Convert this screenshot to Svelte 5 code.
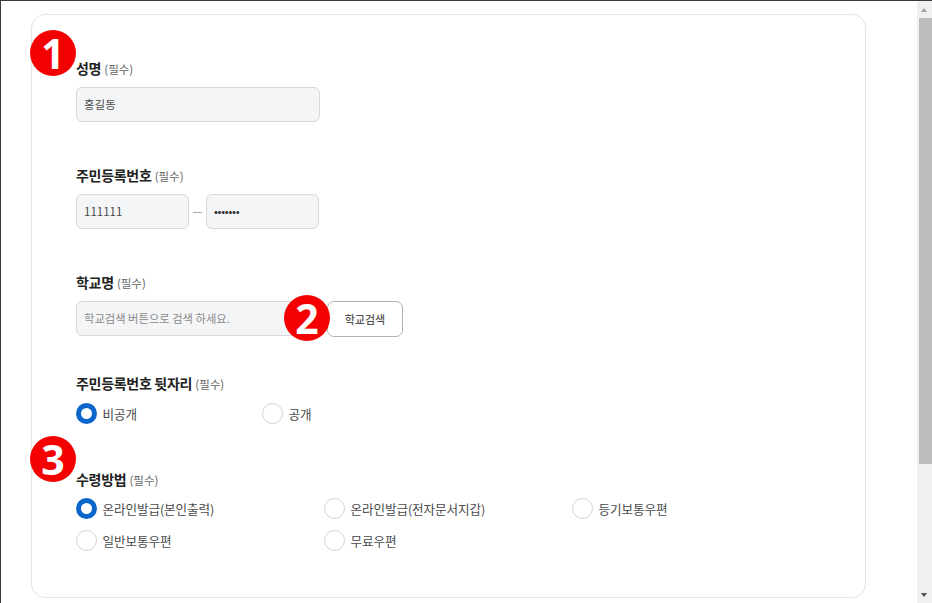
<script>
  const delivery = [
    { label: '온라인발급(본인출력)', checked: true },
    { label: '온라인발급(전자문서지갑)' },
    { label: '등기보통우편' },
    { label: '일반보통우편' },
    { label: '무료우편' }
  ];
</script>

<div class="window">
  <main class="page">
    <section class="card">
      <span class="badge badge-one">1</span>
      <span class="badge badge-two">2</span>
      <span class="badge badge-three">3</span>

      <div class="field name">
        <div class="label"><strong>성명</strong> <small>(필수)</small></div>
        <div class="input wide">홍길동</div>
      </div>

      <div class="field rrn">
        <div class="label"><strong>주민등록번호</strong> <small>(필수)</small></div>
        <div class="row">
          <div class="input half">111111</div>
          <span class="dash"></span>
          <div class="input half secret">•••••••</div>
        </div>
      </div>

      <div class="field school">
        <div class="label"><strong>학교명</strong> <small>(필수)</small></div>
        <div class="row">
          <div class="input wide placeholder">학교검색 버튼으로 검색 하세요.</div>
          <button class="search" type="button">학교검색</button>
        </div>
      </div>

      <div class="field reveal">
        <div class="label"><strong>주민등록번호 뒷자리</strong> <small>(필수)</small></div>
        <div class="radios two">
          <div class="radio"><span class="dot on"></span>비공개</div>
          <div class="radio"><span class="dot"></span>공개</div>
        </div>
      </div>

      <div class="field method">
        <div class="label"><strong>수령방법</strong> <small>(필수)</small></div>
        <div class="radios three">
          {#each delivery as item}
            <div class="radio"><span class="dot" class:on={item.checked}></span>{item.label}</div>
          {/each}
        </div>
      </div>
    </section>
  </main>

  <aside class="scrollbar">
    <span class="arrow up"></span>
    <div class="track"><div class="thumb"></div></div>
    <span class="arrow down"></span>
  </aside>
</div>

<style>
  :global(*) {
    box-sizing: border-box;
  }

  :global(body) {
    background: #fff;
    overflow: hidden;
  }

  .window {
    display: flex;
    width: 932px;
    height: 603px;
    overflow: hidden;
    border-top: 1px solid #3a3a3a;
    border-left: 1px solid #3a3a3a;
    font-family: "Noto Sans CJK KR", "Noto Sans", sans-serif;
    color: #4a4a4a;
  }

  .page {
    flex: 1;
    min-width: 0;
    padding: 13px 51px 0 30px;
  }

  .card {
    position: relative;
    height: 584px;
    padding: 44px 0 0 44px;
    border: 1px solid #e4e4e4;
    border-radius: 14px;
  }

  .badge {
    position: absolute;
    width: 46px;
    height: 46px;
    border-radius: 50%;
    background: #f40000;
    color: #fff;
    font-family: "Noto Sans", sans-serif;
    font-size: 41px;
    font-weight: 700;
    line-height: 46px;
    text-align: center;
  }

  .badge-one {
    left: -2px;
    top: 15px;
  }

  .badge-two {
    left: 252px;
    top: 280px;
    z-index: 1;
  }

  .badge-three {
    left: -2px;
    top: 421px;
  }

  .field {
    display: flex;
    flex-direction: column;
  }

  .label {
    height: 20px;
    margin-bottom: 8px;
    line-height: 18px;
    font-size: 14px;
    white-space: nowrap;
  }

  .label strong {
    color: #222;
    font-weight: 700;
    letter-spacing: -0.3px;
  }

  .label small {
    color: #666;
    font-size: 11.5px;
  }

  .rrn {
    margin-top: 44px;
  }

  .school {
    margin-top: 44px;
  }

  .reveal {
    margin-top: 37px;
  }

  .method {
    margin-top: 46px;
  }

  .row {
    display: flex;
    align-items: flex-start;
  }

  .input {
    height: 35px;
    padding-left: 7px;
    border: 1px solid #d6d8da;
    border-radius: 6px;
    background: #f4f5f7;
    font-size: 11.5px;
    line-height: 33px;
  }

  .wide {
    width: 244px;
  }

  .half {
    width: 113px;
  }

  .placeholder {
    color: #8a8a8a;
    font-size: 11.3px;
  }

  .secret {
    letter-spacing: -0.3px;
    color: #333;
  }

  .dash {
    width: 9px;
    height: 1px;
    margin: 18px 4px 0;
    background: #aaa;
  }

  .search {
    width: 76px;
    height: 36px;
    margin-left: 7px;
    padding: 0;
    border: 1px solid #b4b4b4;
    border-radius: 7px;
    background: #fff;
    color: #555;
    font: 500 11px "Noto Sans CJK KR", sans-serif;
  }

  .radios {
    display: grid;
    row-gap: 11px;
  }

  .two {
    grid-template-columns: 186px 186px;
    margin-top: 1px;
  }

  .three {
    grid-template-columns: repeat(3, 248px);
  }

  .radio {
    display: flex;
    align-items: center;
    gap: 5.5px;
    height: 21px;
    font-size: 12.6px;
    letter-spacing: -0.1px;
    color: #4a4a4a;
  }

  .dot {
    width: 21px;
    height: 21px;
    border: 1px solid #d2d2d2;
    border-radius: 50%;
    background: #fff;
  }

  .dot.on {
    border: 5px solid #0b66cc;
  }

  .scrollbar {
    display: flex;
    flex-direction: column;
    align-items: center;
    flex: 0 0 15px;
    height: 100%;
    background: #f0f0f0;
  }

  .arrow {
    flex: 0 0 17px;
    width: 7px;
    height: 17px;
    position: relative;
  }

  .arrow::after {
    content: "";
    position: absolute;
    left: 0;
    border-left: 3.5px solid transparent;
    border-right: 3.5px solid transparent;
  }

  .arrow.up::after {
    top: 7px;
    border-bottom: 4px solid #a3a3a3;
  }

  .arrow.down::after {
    bottom: 6px;
    border-top: 4px solid #505050;
  }

  .track {
    flex: 1;
    align-self: stretch;
    padding-left: 2px;
  }

  .thumb {
    width: 13px;
    height: 446px;
    background: #bdbdbd;
  }
</style>
